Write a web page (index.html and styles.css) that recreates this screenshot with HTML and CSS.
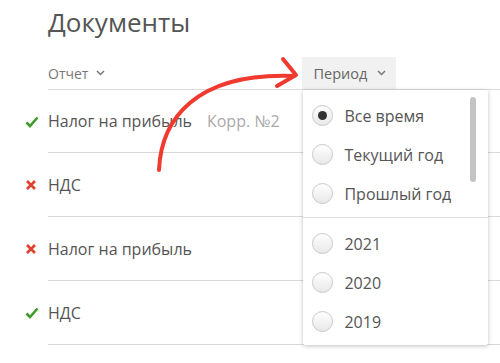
FILE: index.html
```html
<!doctype html>
<html lang="ru">
  <head>
    <meta charset="UTF-8" />
    <title>Документы</title>
    <link rel="stylesheet" href="styles.css">
  </head>
  <body>
    <div class="page">
      <h1 class="title">Документы</h1>

      <div class="toolbar">
        <button class="filter">Отчет
          <svg class="chevron" width="9" height="6" viewBox="0 0 9 6"><polyline points="1,1 4.5,4.5 8,1" /></svg>
        </button>
        <div class="period">
          <button class="filter filter-open">Период
            <svg class="chevron" width="9" height="6" viewBox="0 0 9 6"><polyline points="1,1 4.5,4.5 8,1" /></svg>
          </button>

          <div class="dropdown">
            <div class="scrollbar"></div>
            <label class="option"><span class="radio checked"></span>Все время</label>
            <label class="option"><span class="radio"></span>Текущий год</label>
            <label class="option"><span class="radio"></span>Прошлый год</label>
            <div class="divider"></div>
            <label class="option"><span class="radio"></span>2021</label>
            <label class="option"><span class="radio"></span>2020</label>
            <label class="option"><span class="radio"></span>2019</label>
          </div>
        </div>
      </div>

      <ul class="docs">
        <li class="doc">
          <span class="mark ok">
            <svg width="14" height="12" viewBox="0 0 14 12"><polyline points="1.5,6.5 5,10 12.5,1.5" /></svg>
          </span>
          <span class="doc-body">Налог на прибыль <span class="note">Корр. №2</span></span>
        </li>
        <li class="doc">
          <span class="mark fail">
            <svg width="12" height="12" viewBox="0 0 12 12"><path d="M2 2 L10 10 M10 2 L2 10" /></svg>
          </span>
          <span class="doc-body">НДС</span>
        </li>
        <li class="doc">
          <span class="mark fail">
            <svg width="12" height="12" viewBox="0 0 12 12"><path d="M2 2 L10 10 M10 2 L2 10" /></svg>
          </span>
          <span class="doc-body">Налог на прибыль</span>
        </li>
        <li class="doc">
          <span class="mark ok">
            <svg width="14" height="12" viewBox="0 0 14 12"><polyline points="1.5,6.5 5,10 12.5,1.5" /></svg>
          </span>
          <span class="doc-body">НДС</span>
        </li>
      </ul>

      <!-- hand-drawn pointer -->
      <svg class="pointer" width="500" height="363" viewBox="0 0 500 363">
        <path d="M159 170 C161 120 195 72 294 76" />
        <path d="M283 59 L296 75 L277 86" />
      </svg>
    </div>
  </body>
</html>
```

FILE: styles.css
```css
* {
  margin: 0;
  padding: 0;
  box-sizing: border-box;
}

body {
  font-family: 'Open Sans', 'Noto Sans', sans-serif;
  background: #fff;
  color: #555;
}

.page {
  position: relative;
  width: 500px;
  height: 363px;
  overflow: hidden;
}

.title {
  font-size: 26px;
  font-weight: 400;
  line-height: 36px;
  color: #555;
  padding: 4px 0 0 48px;
  height: 57px;
}

.toolbar {
  display: flex;
  gap: 197px;
  margin-left: 48px;
  height: 33px;
  border-bottom: 1px solid #d9d9d9;
}

.filter {
  display: flex;
  align-items: center;
  gap: 8px;
  height: 32px;
  border: none;
  background: none;
  font-family: inherit;
  font-size: 14px;
  color: #777;
  white-space: nowrap;
  cursor: pointer;
}

.filter-open {
  background: #f1f1f1;
  color: #666;
  padding: 0 10px 0 11px;
  font-size: 14.5px;
  gap: 10px;
}

.chevron polyline {
  fill: none;
  stroke: #777;
  stroke-width: 1.5;
}

.period {
  position: relative;
}

.dropdown {
  position: absolute;
  top: 33px;
  left: 1px;
  width: 185px;
  height: 255px;
  background: #fff;
  border-radius: 2px;
  box-shadow: 0 1px 4px rgba(0, 0, 0, 0.25);
  padding-top: 6px;
  z-index: 2;
}

.scrollbar {
  position: absolute;
  top: 7px;
  right: 12px;
  width: 6px;
  height: 85px;
  border-radius: 3px;
  background: #c4c4c4;
}

.option {
  display: flex;
  align-items: center;
  gap: 11px;
  height: 39px;
  padding-left: 9px;
  font-size: 16px;
  color: #555;
}

.radio {
  width: 21px;
  height: 21px;
  border-radius: 50%;
  border: 1px solid #c9c9c9;
  background: linear-gradient(#fff, #e8e8e8);
  display: flex;
  align-items: center;
  justify-content: center;
}

.radio.checked::after {
  content: '';
  width: 9px;
  height: 9px;
  border-radius: 50%;
  background: #333;
}

.divider {
  height: 1px;
  background: #dedede;
  margin: 4px 0 6px;
}

.docs {
  list-style: none;
  margin-left: 24px;
}

.doc {
  display: flex;
  align-items: stretch;
}

.mark {
  width: 24px;
  display: flex;
  align-items: center;
  padding-left: 1px;
}

.mark svg {
  fill: none;
  stroke-width: 2.6;
}

.mark.ok svg {
  stroke: #3f9b2c;
}

.mark.fail svg {
  stroke: #e2402f;
}

.doc-body {
  flex: 1;
  display: flex;
  align-items: center;
  gap: 15px;
  height: 64px;
  border-bottom: 1px solid #d9d9d9;
  font-size: 16px;
  color: #555;
}

.doc:first-child .doc-body {
  height: 63px;
}

.note {
  color: #aaa;
}

.pointer {
  position: absolute;
  top: 0;
  left: 0;
  pointer-events: none;
}

.pointer path {
  fill: none;
  stroke: #f03a30;
  stroke-width: 4;
  stroke-linecap: round;
  stroke-linejoin: round;
}
```
